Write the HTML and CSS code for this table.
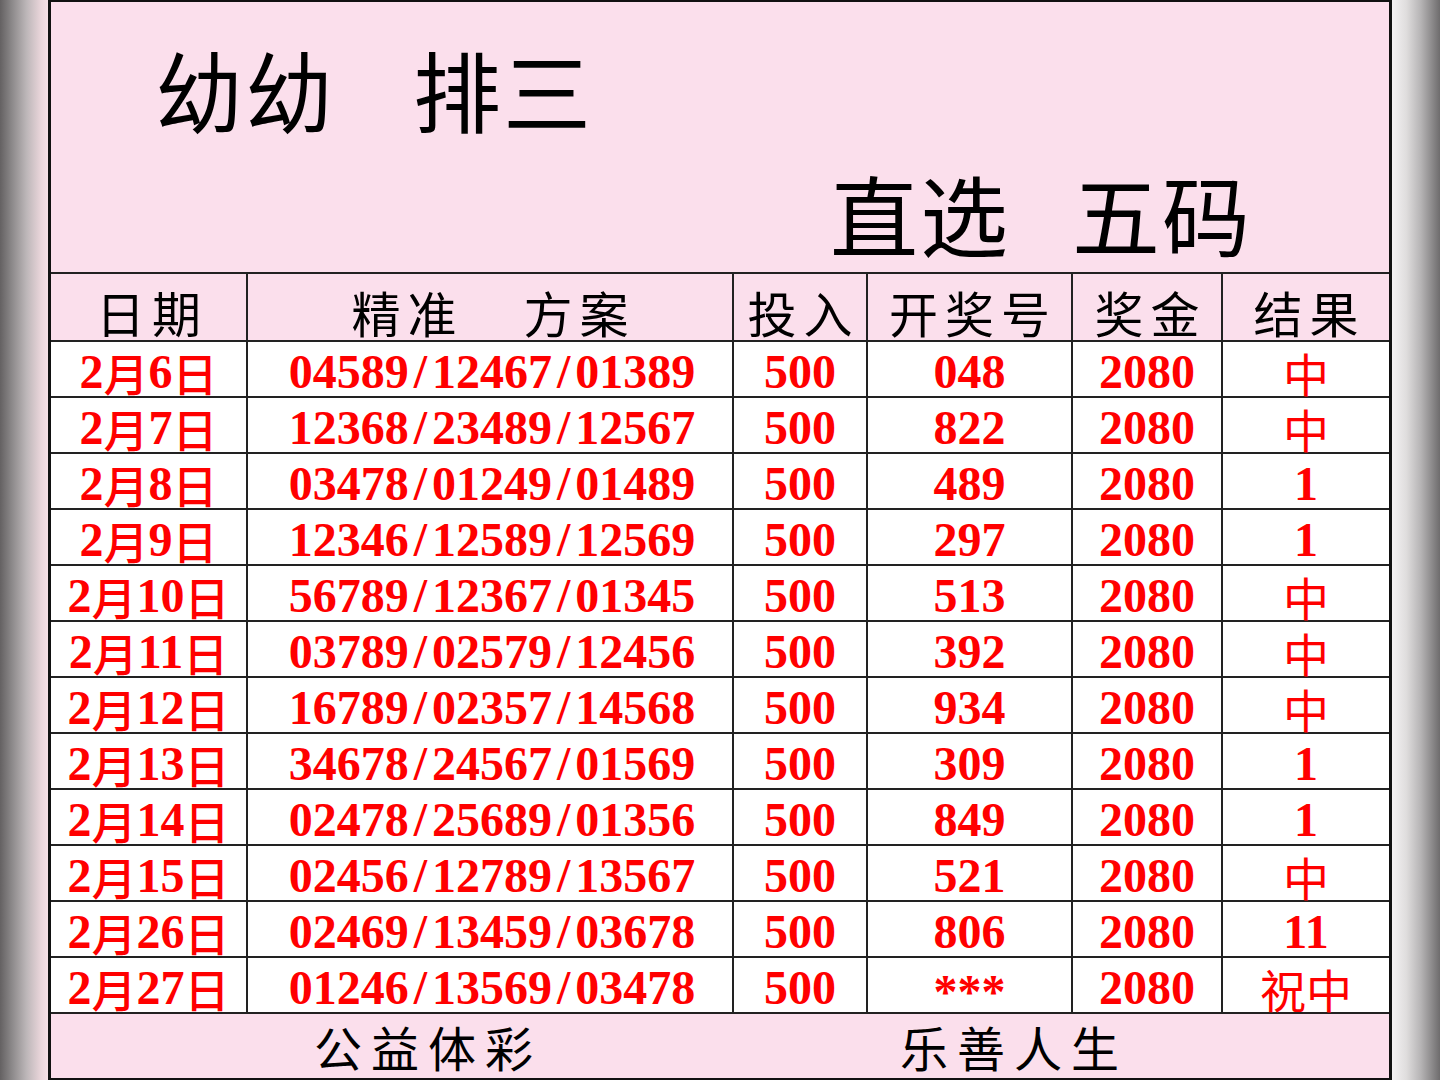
FILE: index.html
```html
<!DOCTYPE html>
<html lang="zh-CN">
<head>
<meta charset="utf-8">
<title>幼幼 排三</title>
<link rel="stylesheet" href="styles.css">
</head>
<body>
<div class="page">
  <div class="side side-left"></div>
  <main class="sheet">
    <header class="title">
      <div class="t1"><span>幼幼</span><span class="gap1">排三</span></div>
      <div class="t2"><span>直选</span><span class="gap2">五码</span></div>
    </header>
    <div class="grid">
      <div class="th">日期</div>
      <div class="th"><span>精准</span><span class="gap3">方案</span></div>
      <div class="th">投入</div>
      <div class="th">开奖号</div>
      <div class="th">奖金</div>
      <div class="th last">结果</div>

      <div class="td date">2<span class="cj">月</span>6<span class="cj">日</span></div>
      <div class="td plan">04589<span class="sl">/</span>12467<span class="sl">/</span>01389</div>
      <div class="td">500</div>
      <div class="td">048</div>
      <div class="td">2080</div>
      <div class="td last"><span class="cj">中</span></div>

      <div class="td date">2<span class="cj">月</span>7<span class="cj">日</span></div>
      <div class="td plan">12368<span class="sl">/</span>23489<span class="sl">/</span>12567</div>
      <div class="td">500</div>
      <div class="td">822</div>
      <div class="td">2080</div>
      <div class="td last"><span class="cj">中</span></div>

      <div class="td date">2<span class="cj">月</span>8<span class="cj">日</span></div>
      <div class="td plan">03478<span class="sl">/</span>01249<span class="sl">/</span>01489</div>
      <div class="td">500</div>
      <div class="td">489</div>
      <div class="td">2080</div>
      <div class="td last">1</div>

      <div class="td date">2<span class="cj">月</span>9<span class="cj">日</span></div>
      <div class="td plan">12346<span class="sl">/</span>12589<span class="sl">/</span>12569</div>
      <div class="td">500</div>
      <div class="td">297</div>
      <div class="td">2080</div>
      <div class="td last">1</div>

      <div class="td date">2<span class="cj">月</span>10<span class="cj">日</span></div>
      <div class="td plan">56789<span class="sl">/</span>12367<span class="sl">/</span>01345</div>
      <div class="td">500</div>
      <div class="td">513</div>
      <div class="td">2080</div>
      <div class="td last"><span class="cj">中</span></div>

      <div class="td date">2<span class="cj">月</span>11<span class="cj">日</span></div>
      <div class="td plan">03789<span class="sl">/</span>02579<span class="sl">/</span>12456</div>
      <div class="td">500</div>
      <div class="td">392</div>
      <div class="td">2080</div>
      <div class="td last"><span class="cj">中</span></div>

      <div class="td date">2<span class="cj">月</span>12<span class="cj">日</span></div>
      <div class="td plan">16789<span class="sl">/</span>02357<span class="sl">/</span>14568</div>
      <div class="td">500</div>
      <div class="td">934</div>
      <div class="td">2080</div>
      <div class="td last"><span class="cj">中</span></div>

      <div class="td date">2<span class="cj">月</span>13<span class="cj">日</span></div>
      <div class="td plan">34678<span class="sl">/</span>24567<span class="sl">/</span>01569</div>
      <div class="td">500</div>
      <div class="td">309</div>
      <div class="td">2080</div>
      <div class="td last">1</div>

      <div class="td date">2<span class="cj">月</span>14<span class="cj">日</span></div>
      <div class="td plan">02478<span class="sl">/</span>25689<span class="sl">/</span>01356</div>
      <div class="td">500</div>
      <div class="td">849</div>
      <div class="td">2080</div>
      <div class="td last">1</div>

      <div class="td date">2<span class="cj">月</span>15<span class="cj">日</span></div>
      <div class="td plan">02456<span class="sl">/</span>12789<span class="sl">/</span>13567</div>
      <div class="td">500</div>
      <div class="td">521</div>
      <div class="td">2080</div>
      <div class="td last"><span class="cj">中</span></div>

      <div class="td date">2<span class="cj">月</span>26<span class="cj">日</span></div>
      <div class="td plan">02469<span class="sl">/</span>13459<span class="sl">/</span>03678</div>
      <div class="td">500</div>
      <div class="td">806</div>
      <div class="td">2080</div>
      <div class="td last">11</div>

      <div class="td date">2<span class="cj">月</span>27<span class="cj">日</span></div>
      <div class="td plan">01246<span class="sl">/</span>13569<span class="sl">/</span>03478</div>
      <div class="td">500</div>
      <div class="td stars">***</div>
      <div class="td">2080</div>
      <div class="td last"><span class="cj">祝中</span></div>

      <div class="foot"><span class="f1">公益体彩</span><span class="f2">乐善人生</span></div>
    </div>
  </main>
  <div class="side side-right"></div>
</div>
</body>
</html>
```

FILE: styles.css
```css
* {
  box-sizing: border-box;
}

html, body {
  margin: 0;
  padding: 0;
}

body {
  width: 1440px;
  height: 1080px;
  overflow: hidden;
  background: #ffffff;
  font-family: "Noto Sans CJK SC", "Liberation Serif", serif;
}

.page {
  display: flex;
  width: 1440px;
  height: 1080px;
}

.side {
  width: 48px;
  flex: none;
  height: 1080px;
}

.side-left {
  background: linear-gradient(to right, #646162 0%, #8c898a 25%, #bcb6b8 55%, #e9d5da 85%, #f6dfe5 100%);
}

.side-right {
  background: linear-gradient(to right, #f4f2f3 0%, #dfdddd 30%, #b6b4b5 60%, #898788 85%, #6e6c6d 100%);
}

.sheet {
  width: 1344px;
  flex: none;
  height: 1080px;
  border-left: 3px solid #111;
  border-right: 3px solid #111;
  border-top: 2px solid #111;
  display: flex;
  flex-direction: column;
  background: #fbdfec;
}

.title {
  height: 272px;
  flex: none;
  border-bottom: 2px solid #222;
  background: #fbdfec;
  color: #000;
  font-family: "Noto Sans CJK SC", sans-serif;
  font-weight: 400;
  font-size: 88px;
  line-height: 1;
  letter-spacing: 2px;
  padding-top: 42px;
}

.t1 {
  padding-left: 104px;
  display: flex;
}

.gap1 {
  margin-left: 78px;
}

.t2 {
  padding-left: 779px;
  margin-top: 36px;
  display: flex;
}

.gap2 {
  margin-left: 62px;
}

.grid {
  display: grid;
  grid-template-columns: 197px 486px 134px 205px 150px 1fr;
  grid-template-rows: 68px repeat(12, 56px) 66px;
  background: #ffffff;
}

.th {
  background: #fbdfec;
  border-right: 2px solid #222;
  border-bottom: 2px solid #222;
  display: flex;
  align-items: center;
  justify-content: center;
  padding-top: 8px;
  padding-left: 7px;
  font-family: "Noto Sans CJK SC", sans-serif;
  font-size: 49px;
  font-weight: 400;
  letter-spacing: 7px;
  line-height: 1;
  color: #000;
}

.gap3 {
  margin-left: 60px;
}

.td {
  background: #ffffff;
  border-right: 2px solid #222;
  border-bottom: 2px solid #222;
  display: flex;
  align-items: center;
  justify-content: center;
  padding-top: 6px;
  font-family: "Liberation Serif", "Noto Sans CJK SC", serif;
  font-weight: 700;
  font-size: 48px;
  line-height: 1;
  color: #ff0000;
}

.last {
  border-right: none;
}

.cj {
  font-family: "Noto Sans CJK SC", sans-serif;
  font-weight: 500;
  font-size: 45px;
}

.last .cj {
  font-size: 46px;
  font-weight: 400;
  letter-spacing: 0;
}

.plan {
  padding-left: 4px;
}

.sl {
  margin: 0 5px;
}

.stars {
  font-size: 48px;
  padding-top: 14px;
}

.foot {
  grid-column: 1 / -1;
  background: #fbdfec;
  border-bottom: 2px solid #111;
  display: flex;
  align-items: center;
  padding-top: 0;
  font-family: "Noto Sans CJK SC", sans-serif;
  font-weight: 400;
  font-size: 48px;
  letter-spacing: 9px;
  line-height: 1;
  color: #000;
}

.f1 {
  margin-left: 263px;
}

.f2 {
  margin-left: 358px;
}
```
